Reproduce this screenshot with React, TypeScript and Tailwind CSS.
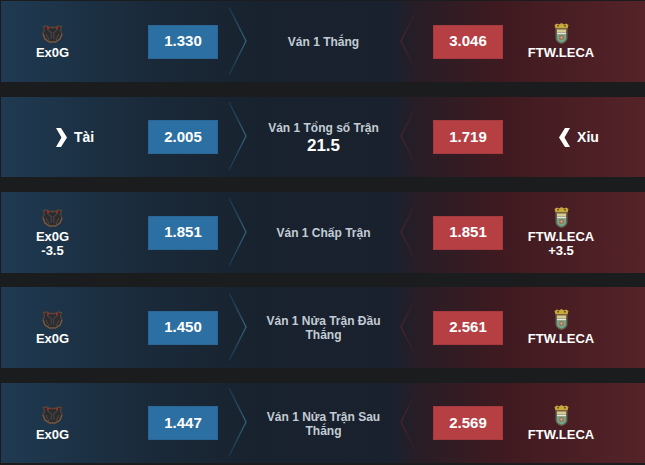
const font = "[font-family:'Liberation_Sans',Arial,sans-serif]";

function Bear() {
  return (
    <svg width="21" height="18" viewBox="0 0 21 18" fill="none" className="block">
      <path d="M1.5 1.5 L5 1 L8 2.5 L13 2.5 L16 1 L19.5 1.5 L18.5 5 L20 9 L18 14 L13.5 17 L7.5 17 L3 14 L1 9 L2.5 5 Z" fill="#2a2c30" stroke="#57443a" strokeWidth="1.3" />
      <path d="M5 4 L9.5 8 L9 14 M16 4 L11.5 8 L12 14 M4 9 L7 15 M17 9 L14 15" stroke="#4b4240" strokeWidth="1.2" />
      <path d="M1 9 L3 14 L7.5 17 L13.5 17 L18 14 L20 9" stroke="#7c5a3c" strokeWidth="1.2" />
      <rect x="5" y="2" width="2" height="2" fill="#b3231f" />
      <rect x="14" y="2" width="2" height="2" fill="#b3231f" />
    </svg>
  );
}

function Crest() {
  return (
    <svg width="15" height="21" viewBox="0 0 15 21" className="block">
      <path d="M0.5 2 L3 0.5 L5 1.5 L7.5 0 L10 1.5 L12 0.5 L14.5 2 L13.5 5.5 L1.5 5.5 Z" fill="#c9a83c" />
      <rect x="3" y="2" width="2" height="1.5" fill="#6e5a2a" />
      <rect x="10" y="2" width="2" height="1.5" fill="#6e5a2a" />
      <path d="M1.5 5.5 H13.5 V15 Q13.5 19 7.5 21 Q1.5 19 1.5 15 Z" fill="#6a6650" />
      <rect x="3" y="6.5" width="9" height="2.5" fill="#d8c98c" />
      <rect x="3" y="9.5" width="9" height="2" fill="#e8ead8" />
      <path d="M3 11.5 H12 V15 Q12 18 7.5 19.5 Q3 18 3 15 Z" fill="#6fa98c" />
      <rect x="5.5" y="12.5" width="4" height="4" fill="#a9554b" />
      <rect x="6.5" y="13.5" width="2" height="2" fill="#d7c07e" />
    </svg>
  );
}

function Chevron({ side }: { side: "left" | "right" }) {
  const id = side === "right" ? "cb" : "cr";
  const c = side === "right" ? "#33607f" : "#4d232b";
  const e = side === "right" ? "#1d3448" : "#241c27";
  return (
    <svg width="19" height="70" viewBox="0 0 19 70" fill="none" className="block shrink-0">
      <defs>
        <linearGradient id={id} gradientUnits="userSpaceOnUse" x1="0" y1="0" x2="0" y2="68">
          <stop offset="0" stopColor={e} />
          <stop offset="0.5" stopColor={c} />
          <stop offset="1" stopColor={e} />
        </linearGradient>
      </defs>
      <path d={side === "right" ? "M1 0 L18 34 L1 68" : "M18 0 L1 34 L18 68"} stroke={`url(#${id})`} strokeWidth="1.3" />
    </svg>
  );
}

function Team({ kind, line }: { kind: "bear" | "crest"; line?: string }) {
  return (
    <div className="flex flex-col items-center">
      <div className="h-[21px] flex items-center justify-center">{kind === "bear" ? <Bear /> : <Crest />}</div>
      <div className="text-[13px] leading-[15px] font-bold text-white mt-[1px]">{kind === "bear" ? "Ex0G" : "FTW.LECA"}</div>
      {line && <div className="text-[13px] leading-[14px] font-bold text-white">{line}</div>}
    </div>
  );
}

function OddBtn({ v, red }: { v: string; red?: boolean }) {
  return (
    <div
      className={`w-[70px] h-[34px] shrink-0 flex items-center justify-center text-[15px] font-bold text-white border ${
        red ? "bg-[#b63f44] border-[#a63a40]" : "bg-[#2c70a3] border-[#2a6794]"
      }`}
    >
      {v}
    </div>
  );
}

function Row({
  left,
  right,
  a,
  b,
  title,
  sub,
  h,
  mb,
}: {
  left: React.ReactNode;
  right: React.ReactNode;
  a: string;
  b: string;
  title: React.ReactNode;
  sub?: string;
  h: string;
  mb: string;
}) {
  return (
    <div
      className={`${h} ${mb} ml-[1px] flex items-center bg-[linear-gradient(90deg,#1f3a52_0%,#1a2a3a_22%,#18222e_40%,#1a212e_61%,#291d25_65%,#3f1a20_78%,#552328_100%)]`}
    >
      <div className="w-[105px] flex justify-center shrink-0 pr-[2px]">{left}</div>
      <div className="w-[42px] shrink-0" />
      <OddBtn v={a} />
      <div className="w-[10px] shrink-0" />
      <Chevron side="right" />
      <div className="flex-1 flex flex-col items-center text-center pt-[1px]">
        <div className="text-[12px] leading-[14px] font-bold text-[#c3ccd5] w-[130px]">{title}</div>
        {sub && <div className="text-[17px] leading-[18px] font-bold text-white mt-[2px]">{sub}</div>}
      </div>
      <Chevron side="left" />
      <div className="w-[14px] shrink-0" />
      <OddBtn v={b} red />
      <div className="w-[142px] flex justify-center shrink-0 pr-[26px]">{right}</div>
    </div>
  );
}

function Arrow({ dir, label }: { dir: "left" | "right"; label: string }) {
  return (
    <div className="flex items-center gap-[7px] text-[14px] font-bold text-white">
      <svg width="11" height="19" viewBox="0 0 11 19" className="block">
        {dir === "right" ? <path d="M0 0 H5 L11 9.5 L5 19 H0 L5.5 9.5 Z" fill="#fff" /> : <path d="M11 0 H6 L0 9.5 L6 19 H11 L5.5 9.5 Z" fill="#fff" />}
      </svg>
      <span>{label}</span>
    </div>
  );
}

export default function App() {
  return (
    <div className={`w-[645px] h-[465px] overflow-hidden bg-[#1b1c1e] pt-[1px] ${font}`}>
      <Row h="h-[81px]" mb="mb-[15px]" left={<Team kind="bear" />} right={<Team kind="crest" />} a="1.330" b="3.046" title="Ván 1 Thắng" />
      <Row h="h-[80px]" mb="mb-[15px]" left={<div className="pl-[45px]"><Arrow dir="right" label="Tài" /></div>} right={<div className="pl-[36px]"><Arrow dir="left" label="Xỉu" /></div>} a="2.005" b="1.719" title="Ván 1 Tổng số Trận" sub="21.5" />
      <Row h="h-[81px]" mb="mb-[14px]" left={<Team kind="bear" line="-3.5" />} right={<Team kind="crest" line="+3.5" />} a="1.851" b="1.851" title="Ván 1 Chấp Trận" />
      <Row h="h-[81px]" mb="mb-[15px]" left={<Team kind="bear" />} right={<Team kind="crest" />} a="1.450" b="2.561" title="Ván 1 Nửa Trận Đầu Thắng" />
      <Row h="h-[80px]" mb="mb-0" left={<Team kind="bear" />} right={<Team kind="crest" />} a="1.447" b="2.569" title="Ván 1 Nửa Trận Sau Thắng" />
    </div>
  );
}
